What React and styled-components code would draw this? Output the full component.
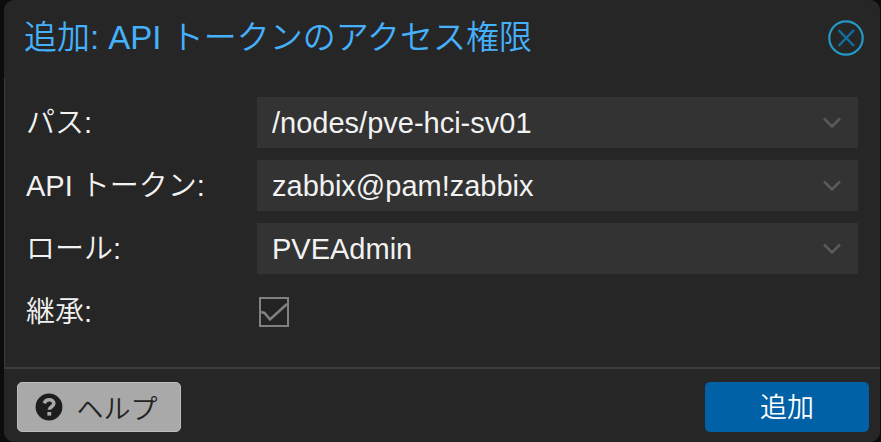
import React, { useState } from 'react';
import styled, { createGlobalStyle } from 'styled-components';

const fields = [
  { id: 'path', label: 'パス:', options: ['/nodes/pve-hci-sv01', '/', '/nodes', '/storage'] },
  { id: 'token', label: 'API トークン:', options: ['zabbix@pam!zabbix'] },
  { id: 'role', label: 'ロール:', options: ['PVEAdmin', 'PVEAuditor', 'NoAccess'] }
];

const App = () => {
  const [values, setValues] = useState({
    path: '/nodes/pve-hci-sv01',
    token: 'zabbix@pam!zabbix',
    role: 'PVEAdmin'
  });
  const [propagate, setPropagate] = useState(true);

  const handleChange = (e) => {
    const { name, value } = e.target;
    setValues(prev => ({ ...prev, [name]: value }));
  };

  return (
    <>
      <GlobalStyle />
      <Dialog role="dialog" aria-labelledby="dialog-title">
        <Header>
          <Title id="dialog-title">追加: API トークンのアクセス権限</Title>
          <CloseButton type="button" aria-label="閉じる">
            <svg width="36" height="36" viewBox="0 0 36 36" fill="none">
              <circle cx="18" cy="18" r="16.7" stroke="#2299c6" strokeWidth="2.2" />
              <path d="M10.5 10 L26 26 M26 10 L10.5 26" stroke="#136fa3" strokeWidth="2.4" />
            </svg>
          </CloseButton>
        </Header>

        <Form id="acl-form" onSubmit={(e) => e.preventDefault()}>
          {fields.map(({ id, label, options }) => (
            <FormRow key={id}>
              <Label htmlFor={id}>{label}</Label>
              <SelectBox>
                <Select id={id} name={id} value={values[id]} onChange={handleChange}>
                  {options.map(option => (
                    <option key={option} value={option}>{option}</option>
                  ))}
                </Select>
                <Chevron viewBox="0 0 20 14">
                  <path d="M2 2.5 L10 10.5 L18 2.5" />
                </Chevron>
              </SelectBox>
            </FormRow>
          ))}
          <FormRow>
            <Label htmlFor="propagate">継承:</Label>
            <CheckBox>
              <CheckInput
                type="checkbox"
                id="propagate"
                checked={propagate}
                onChange={(e) => setPropagate(e.target.checked)}
              />
              {propagate && (
                <CheckMark viewBox="0 0 30 30">
                  <path d="M2 15 L5.5 16 L11 22.5 L28 7" />
                </CheckMark>
              )}
            </CheckBox>
          </FormRow>
        </Form>

        <Footer>
          <HelpButton type="button">
            <svg width="28" height="28" viewBox="0 0 28 28" fill="none" aria-hidden="true">
              <circle cx="14" cy="14" r="13.4" fill="#1d1d1d" />
              <path d="M9.2 10.2 C10.4 7.6 12 6.8 14.2 6.8 C17 6.8 18.8 8.4 18.8 10.6 C18.8 13.8 14.3 13.6 14.3 16.8" stroke="#a9a9a9" strokeWidth="3.6" />
              <rect x="12.4" y="19" width="3.8" height="3.6" fill="#a9a9a9" />
            </svg>
            ヘルプ
          </HelpButton>
          <SubmitButton type="submit" form="acl-form">追加</SubmitButton>
        </Footer>
      </Dialog>
    </>
  );
};

// Styled Components
const GlobalStyle = createGlobalStyle`
  * {
    box-sizing: border-box;
  }

  body {
    margin: 0;
    background: #0c0c0c;
    color: #f2f2f2;
    font-family: "Liberation Sans", "Noto Sans CJK JP", sans-serif;
    font-size: 29px;
    font-weight: 350;
  }

  button, select {
    font: inherit;
  }
`;

const Dialog = styled.div`
  display: flex;
  flex-direction: column;
  margin: 0 1px 0 4px;
  background: #262626;
  border-radius: 10px;
`;

const Header = styled.header`
  display: flex;
  align-items: center;
  justify-content: space-between;
  height: 78px;
  padding: 0 16px 3px 20px;
`;

const Title = styled.h1`
  margin: 0;
  color: #45b0fb;
  font-size: 33px;
  font-weight: 350;
  line-height: 48px;
  white-space: nowrap;
`;

const CloseButton = styled.button`
  display: flex;
  padding: 0;
  border: none;
  background: none;
  cursor: pointer;
`;

const Form = styled.form`
  display: flex;
  flex-direction: column;
  gap: 12px;
  padding: 19px 22px 30px 21px;
  border-left: 1px solid #3b3b3b;
  border-bottom: 2px solid #3b3b3b;
`;

const FormRow = styled.div`
  display: grid;
  grid-template-columns: 231px 1fr;
  align-items: center;
  height: 51px;
`;

const Label = styled.label`
  line-height: 40px;
  white-space: nowrap;
`;

const SelectBox = styled.div`
  display: grid;
  align-items: center;
`;

const Select = styled.select`
  grid-area: 1 / 1;
  width: 100%;
  height: 51px;
  padding: 0 60px 0 15px;
  border: none;
  border-radius: 0;
  appearance: none;
  background: #333333;
  color: #f2f2f2;
`;

const Chevron = styled.svg`
  grid-area: 1 / 1;
  justify-self: end;
  width: 20px;
  height: 14px;
  margin-right: 16px;
  fill: none;
  stroke: #5a5a5a;
  stroke-width: 2.6;
  pointer-events: none;
`;

const CheckBox = styled.div`
  display: grid;
  justify-content: start;
  padding-left: 2px;
`;

const CheckInput = styled.input`
  grid-area: 1 / 1;
  width: 30px;
  height: 30px;
  margin: 0;
  border: 2px solid #808080;
  appearance: none;
  background: #232323;
`;

const CheckMark = styled.svg`
  grid-area: 1 / 1;
  width: 30px;
  height: 30px;
  fill: none;
  stroke: #808080;
  stroke-width: 2.6;
  pointer-events: none;
`;

const Footer = styled.footer`
  display: flex;
  justify-content: space-between;
  padding: 13px 11px 10px 13px;
`;

const Button = styled.button`
  display: flex;
  align-items: center;
  justify-content: center;
  min-width: 164px;
  height: 50px;
  padding: 0 16px 3px;
  border: none;
  border-radius: 5px;
  font-size: 27px;
  cursor: pointer;
`;

const HelpButton = styled(Button)`
  gap: 14px;
  padding: 0 22px 0 16px;
  border: 1px solid #bcbcbc;
  background: #a9a9a9;
  color: #222222;
`;

const SubmitButton = styled(Button)`
  background: #0161a7;
  color: #ffffff;
`;

export default App;
